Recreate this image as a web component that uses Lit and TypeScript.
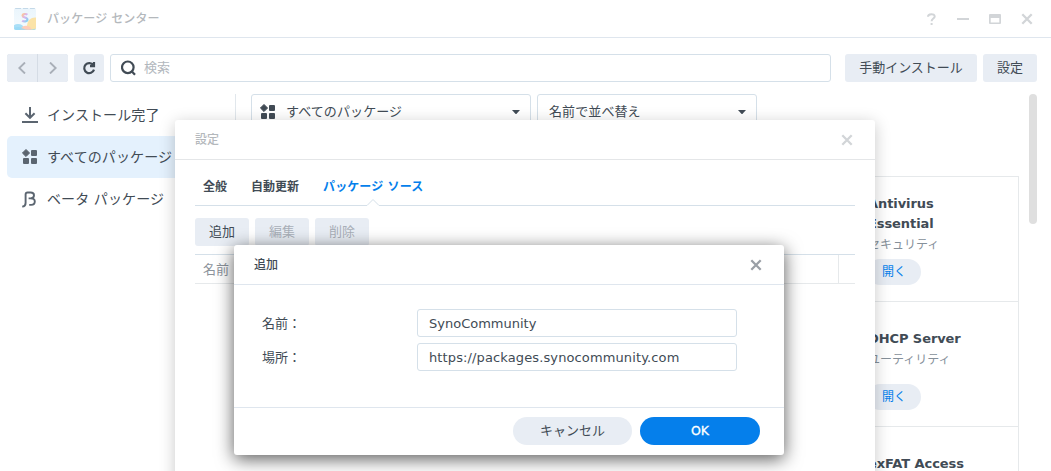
import { LitElement, html, css } from "lit";
import { customElement, property } from "lit/decorators.js";

const gridIcon = html`<svg width="16" height="16" viewBox="0 0 16 16" fill="currentColor">
  <path d="M4 .4 7.6 4 4 7.6 .4 4Z" stroke="currentColor" stroke-width=".9" stroke-linejoin="round" />
  <rect x="9" y="1" width="6" height="6" rx="1" />
  <rect x="1" y="9" width="6" height="6" rx="1" />
  <rect x="9" y="9" width="6" height="6" rx="1" />
</svg>`;

const downloadIcon = html`<svg width="16" height="16" viewBox="0 0 16 16" fill="none" stroke="currentColor" stroke-width="2">
  <path d="M8 0V11M3.4 6.2 8 10.8 12.6 6.2M0 15H16" />
</svg>`;

const betaIcon = html`<svg width="16" height="17" viewBox="0 0 16 17" fill="none" stroke="currentColor" stroke-width="1.9">
  <path d="M.2 15.6Q3.6 15.4 3.6 12V3.4Q3.6 1.5 5.5 1.5H8.6C11 1.5 12 2.8 12 4.3C12 6 10.8 7.4 8.6 7.4H6.6M8.6 7.4C11.4 7.4 12.8 8.7 12.8 10.6C12.8 12.6 11.4 13.9 9.2 13.9H7.2" />
</svg>`;

const closeIcon = html`<svg width="12" height="12" viewBox="0 0 12 12" fill="none" stroke="currentColor" stroke-width="2.3">
  <path d="M1.3 1.3 10.7 10.7M10.7 1.3 1.3 10.7" />
</svg>`;

const caret = html`<svg width="8" height="4" viewBox="0 0 8 4" fill="currentColor"><path d="M0 0H8L4.6 3.7Q4 4.2 3.4 3.7Z" /></svg>`;

const logo = html`<svg width="22" height="22" viewBox="0 0 22 22">
  <defs>
    <linearGradient id="sky" x1="0" y1="0" x2="0" y2="1"><stop offset="0" stop-color="#eaf5fc" /><stop offset="1" stop-color="#f6fbfe" /></linearGradient>
    <linearGradient id="ess" x1="0" y1="0" x2="1" y2="1"><stop offset="0" stop-color="#ffc993" /><stop offset=".45" stop-color="#dbb3ef" /><stop offset="1" stop-color="#80d4f2" /></linearGradient>
    <clipPath id="tile"><rect width="22" height="22" rx="2" /></clipPath>
  </defs>
  <g clip-path="url(#tile)">
    <rect width="22" height="22" fill="url(#sky)" />
    <path d="M1 .5H7M9 .5H14M16 .5H21" stroke="#c4d9e8" />
    <circle cx="21" cy="17.5" r="8" fill="#fbe3a8" />
    <ellipse cx="4" cy="20.5" rx="6" ry="4.5" fill="#a9dff7" />
    <ellipse cx="12" cy="22" rx="5.5" ry="4.2" fill="#ffcdb8" />
    <path d="M0 20Q5 18 9 20.5T22 20.5V22H0Z" fill="#97d8f6" opacity=".75" />
    <path d="M13.3 6.8C12.3 5.7 8.6 5.6 8.6 7.7C8.6 10 13.4 9 13.4 11.5C13.4 13.8 9.5 13.7 8.2 12.6" fill="none" stroke="url(#ess)" stroke-width="2.2" />
  </g>
</svg>`;

@customElement("package-card")
class PackageCard extends LitElement {
  @property() name = "";
  @property() category = "";
  static styles = css`
    :host { display: block; height: 125px; box-sizing: border-box; border-bottom: 1px solid #e6e9eb; padding: 13px 0 0 105px; }
    .info { height: 69px; display: flex; flex-direction: column; justify-content: center; }
    .name { width: 120px; font-weight: 700; font-size: 13px; line-height: 20px; letter-spacing: -.08px; color: #414b55; }
    .category { font-size: 12px; line-height: 20px; min-height: 20px; color: #86909a; padding-top: 1px; white-space: nowrap; }
    .open { font: inherit; font-size: 12px; display: block; border: 0; padding: 0; margin-left: -1px; width: 54px; height: 26px; border-radius: 13px; background: #e8edf4; color: #057feb; }
  `;
  render() {
    return html`<div class="info"><div class="name">${this.name}</div><div class="category">${this.category}</div></div>
      <button class="open">開く</button>`;
  }
}

@customElement("settings-window")
class SettingsWindow extends LitElement {
  static styles = css`
    :host { display: block; background: #fff; border-radius: 3px 3px 0 0; box-shadow: 0 3px 16px rgba(0, 0, 0, .22); font-size: 13px; }
    .head { height: 39px; border-bottom: 1px solid #e4e6e8; display: flex; align-items: center; justify-content: space-between; padding: 0 22px 0 20px; color: #b4b8bc; font-size: 12px; font-weight: 500; }
    .head svg { color: #d2d5d8; display: block; }
    .body { padding: 0 20px; }
    .tabs { display: flex; height: 45px; padding: 9px 8px 0; box-sizing: border-box; gap: 24px; font-size: 12px; font-weight: 700; color: #414b55; line-height: 37px; }
    .active { color: #057feb; letter-spacing: .1px; }
    .line { display: flex; height: 1px; }
    .line svg { overflow: visible; display: block; }
    .buttons { display: flex; gap: 6px; padding-top: 12px; }
    .buttons button { font: inherit; width: 54px; height: 28px; border: 0; padding: 0; border-radius: 3px; background: #e8edf4; color: #414b55; }
    .buttons button.off { color: #a9afb8; }
    .table { margin-top: 8px; height: 30px; box-sizing: border-box; border-top: 1px solid #d5e0e9; border-bottom: 1px solid #e6e9eb; display: flex; justify-content: space-between; line-height: 30px; padding-left: 8px; color: #8c939b; }
    .col { width: 16px; height: 28px; border-left: 1px solid #e6e9eb; }
  `;
  render() {
    return html`
      <div class="head"><span>設定</span>${closeIcon}</div>
      <div class="body">
        <div class="tabs"><span>全般</span><span>自動更新</span><span class="active">パッケージ ソース</span></div>
        <div class="line"><svg width="660" height="1" fill="none" stroke="#d5e0e9"><path d="M0 .5H172L178 -5.5L184 .5H660" /></svg></div>
        <div class="buttons"><button>追加</button><button class="off">編集</button><button class="off">削除</button></div>
        <div class="table"><span>名前</span><span class="col"></span></div>
      </div>`;
  }
}

@customElement("add-dialog")
class AddDialog extends LitElement {
  static styles = css`
    :host { display: flex; flex-direction: column; background: #fff; border-radius: 3px; box-shadow: 0 4px 18px rgba(0, 0, 0, .65); font-size: 13px; color: #414b55; }
    .head { height: 39px; border-bottom: 1px solid #dfe6ee; display: flex; align-items: center; justify-content: space-between; padding: 0 22px 0 20px; font-size: 12px; font-weight: 500; }
    .head svg { color: #9a9fa6; display: block; }
    .form { flex: 1; padding: 24px 47px 0 28px; display: flex; flex-direction: column; gap: 6px; }
    .row { display: flex; justify-content: space-between; line-height: 30px; height: 28px; }
    .input { width: 320px; height: 28px; box-sizing: border-box; border: 1px solid #d5e0e9; border-radius: 3px; padding: 0 11px; line-height: 28px; }
    .url { letter-spacing: .12px; }
    .foot { height: 47px; border-top: 1px solid #dfe6ee; display: flex; justify-content: flex-end; align-items: center; gap: 8px; padding: 0 24px 1px 0; box-sizing: content-box; height: 46px; }
    .foot button { font: inherit; height: 28px; width: 119px; border: 0; border-radius: 14px; padding: 0; background: #e8edf4; color: #414b55; }
    .foot button.ok { width: 120px; background: #057feb; color: #fff; font-size: 12.5px; -webkit-text-stroke: .3px #fff; }
  `;
  render() {
    return html`
      <div class="head"><span>追加</span>${closeIcon}</div>
      <div class="form">
        <div class="row"><span>名前：</span><div class="input">SynoCommunity</div></div>
        <div class="row"><span>場所：</span><div class="input url">https://packages.synocommunity.com</div></div>
      </div>
      <div class="foot"><button>キャンセル</button><button class="ok">OK</button></div>`;
  }
}

@customElement("app-root")
class AppRoot extends LitElement {
  static styles = css`
    :host { display: flex; flex-direction: column; position: relative; width: 1051px; height: 471px; overflow: hidden; background: #fff; color: #414b55; font: 13px/20px "DejaVu Sans", "Noto Sans CJK JP", sans-serif; }
    svg { display: block; flex: none; }
    .title { height: 37px; flex: none; border-bottom: 1px solid #dfe6ee; display: flex; align-items: center; padding: 0 18px 0 14px; color: #b4b8bc; font-size: 12px; font-weight: 500; }
    .title .caption { margin-left: 11px; flex: 1; letter-spacing: .1px; }
    .controls { display: flex; gap: 20px; align-items: center; color: #d2d5d8; }
    .toolbar { display: flex; padding: 16px 14px 0 7px; height: 28px; flex: none; }
    .btn { font: inherit; color: inherit; background: #e8edf4; border: 0; padding: 0; border-radius: 3px; display: flex; align-items: center; justify-content: center; }
    .nav { width: 30px; color: #a9afb8; }
    .prev { border-radius: 3px 0 0 3px; }
    .next { border-radius: 0 3px 3px 0; margin-left: 1px; }
    .pair { display: flex; background: #d5dce5; border-radius: 3px; }
    .reload { width: 30px; margin-left: 6px; }
    .search { margin: 0 14px 0 6px; flex: 1; box-sizing: border-box; border: 1px solid #d5e0e9; border-radius: 3px; display: flex; align-items: center; padding-left: 10px; gap: 8px; color: #b2b7bd; }
    .search svg { color: #414b55; }
    .manual { width: 132px; }
    .settings { width: 54px; margin-left: 6px; }
    .content { display: flex; padding-top: 12px; flex: 1; min-height: 0; }
    .side { width: 228px; padding-left: 7px; border-right: 1px solid #e1e7ec; font-size: 14px; }
    .item { height: 42px; display: flex; align-items: center; gap: 9px; padding-left: 15px; border-radius: 5px 0 0 5px; white-space: nowrap; letter-spacing: .1px; }
    .item svg { color: #5b6570; }
    .selected { background: #e4f1fd; }
    .main { flex: 1; padding-left: 15px; }
    .filters { display: flex; gap: 6px; }
    .select { width: 280px; height: 34px; box-sizing: border-box; border: 1px solid #d5e0e9; border-radius: 3px; display: flex; align-items: center; padding: 1px 10px 0 8px; gap: 10px; }
    .select.sort { width: 220px; padding-left: 11px; }
    .select span { flex: 1; letter-spacing: .1px; }
    .cards { display: grid; grid-template-columns: repeat(3, 256px); border-top: 1px solid #e6e9eb; border-right: 1px solid #e6e9eb; margin-top: 48px; width: 767px; }
    .cards package-card { grid-column: 3; }
    .scroll { width: 8px; height: 130px; border-radius: 4px; background: #dfdfdf; margin: 0 14px 0 10px; }
    settings-window { position: absolute; left: 175px; top: 120px; width: 700px; height: 370px; }
    add-dialog { position: absolute; left: 234px; top: 245px; width: 550px; height: 210px; }
  `;
  render() {
    return html`
      <header class="title">
        ${logo}<span class="caption">パッケージ センター</span>
        <div class="controls">
          <svg width="12" height="12" viewBox="0 0 12 12" fill="none" stroke="currentColor" stroke-width="2"><path d="M3 3.8C3 .4 9.7.2 9.7 3.5C9.7 5.6 6.6 5.6 6.6 8.2M6.6 10V12" /></svg>
          <svg width="12" height="12" viewBox="0 0 12 12" fill="currentColor"><path d="M0 5H12V7H0Z" /></svg>
          <svg width="12" height="12" viewBox="0 0 12 12"><path fill="currentColor" fill-rule="evenodd" d="M1 1H11Q12 1 12 2V10Q12 11 11 11H1Q0 11 0 10V2Q0 1 1 1ZM1.7 5V9.5H10.3V5Z" /></svg>
          ${closeIcon}
        </div>
      </header>
      <div class="toolbar">
        <div class="pair">
          <button class="btn nav prev"><svg width="8" height="12" viewBox="0 0 8 12" fill="none" stroke="currentColor" stroke-width="1.9"><path d="M7 .5 1.3 6 7 11.5" /></svg></button>
          <button class="btn nav next"><svg width="8" height="12" viewBox="0 0 8 12" fill="none" stroke="currentColor" stroke-width="1.9"><path d="M1 .5 6.7 6 1 11.5" /></svg></button>
        </div>
        <button class="btn reload"><svg width="14" height="14" viewBox="0 0 14 14" fill="none" stroke="currentColor" stroke-width="2.2"><path d="M11.3 4.2A5 5 0 1 0 12 8.6M12 1V5.2H8" /></svg></button>
        <div class="search"><svg width="15" height="16" viewBox="0 0 15 16" fill="none" stroke="currentColor" stroke-width="2.2"><circle cx="6.8" cy="7.3" r="5.8" /><path d="M10.4 11 14 14.8" /></svg><span>検索</span></div>
        <button class="btn manual">手動インストール</button>
        <button class="btn settings">設定</button>
      </div>
      <div class="content">
        <nav class="side">
          <div class="item">${downloadIcon}<span>インストール完了</span></div>
          <div class="item selected">${gridIcon}<span>すべてのパッケージ</span></div>
          <div class="item">${betaIcon}<span>ベータ パッケージ</span></div>
        </nav>
        <main class="main">
          <div class="filters">
            <div class="select">${gridIcon}<span>すべてのパッケージ</span>${caret}</div>
            <div class="select sort"><span>名前で並べ替え</span>${caret}</div>
          </div>
          <div class="cards">
            <package-card name="Antivirus Essential" category="セキュリティ"></package-card>
            <package-card name="DHCP Server" category="ユーティリティ"></package-card>
            <package-card name="exFAT Access"></package-card>
          </div>
        </main>
        <div class="scroll"></div>
      </div>
      <settings-window></settings-window>
      <add-dialog></add-dialog>`;
  }
}
